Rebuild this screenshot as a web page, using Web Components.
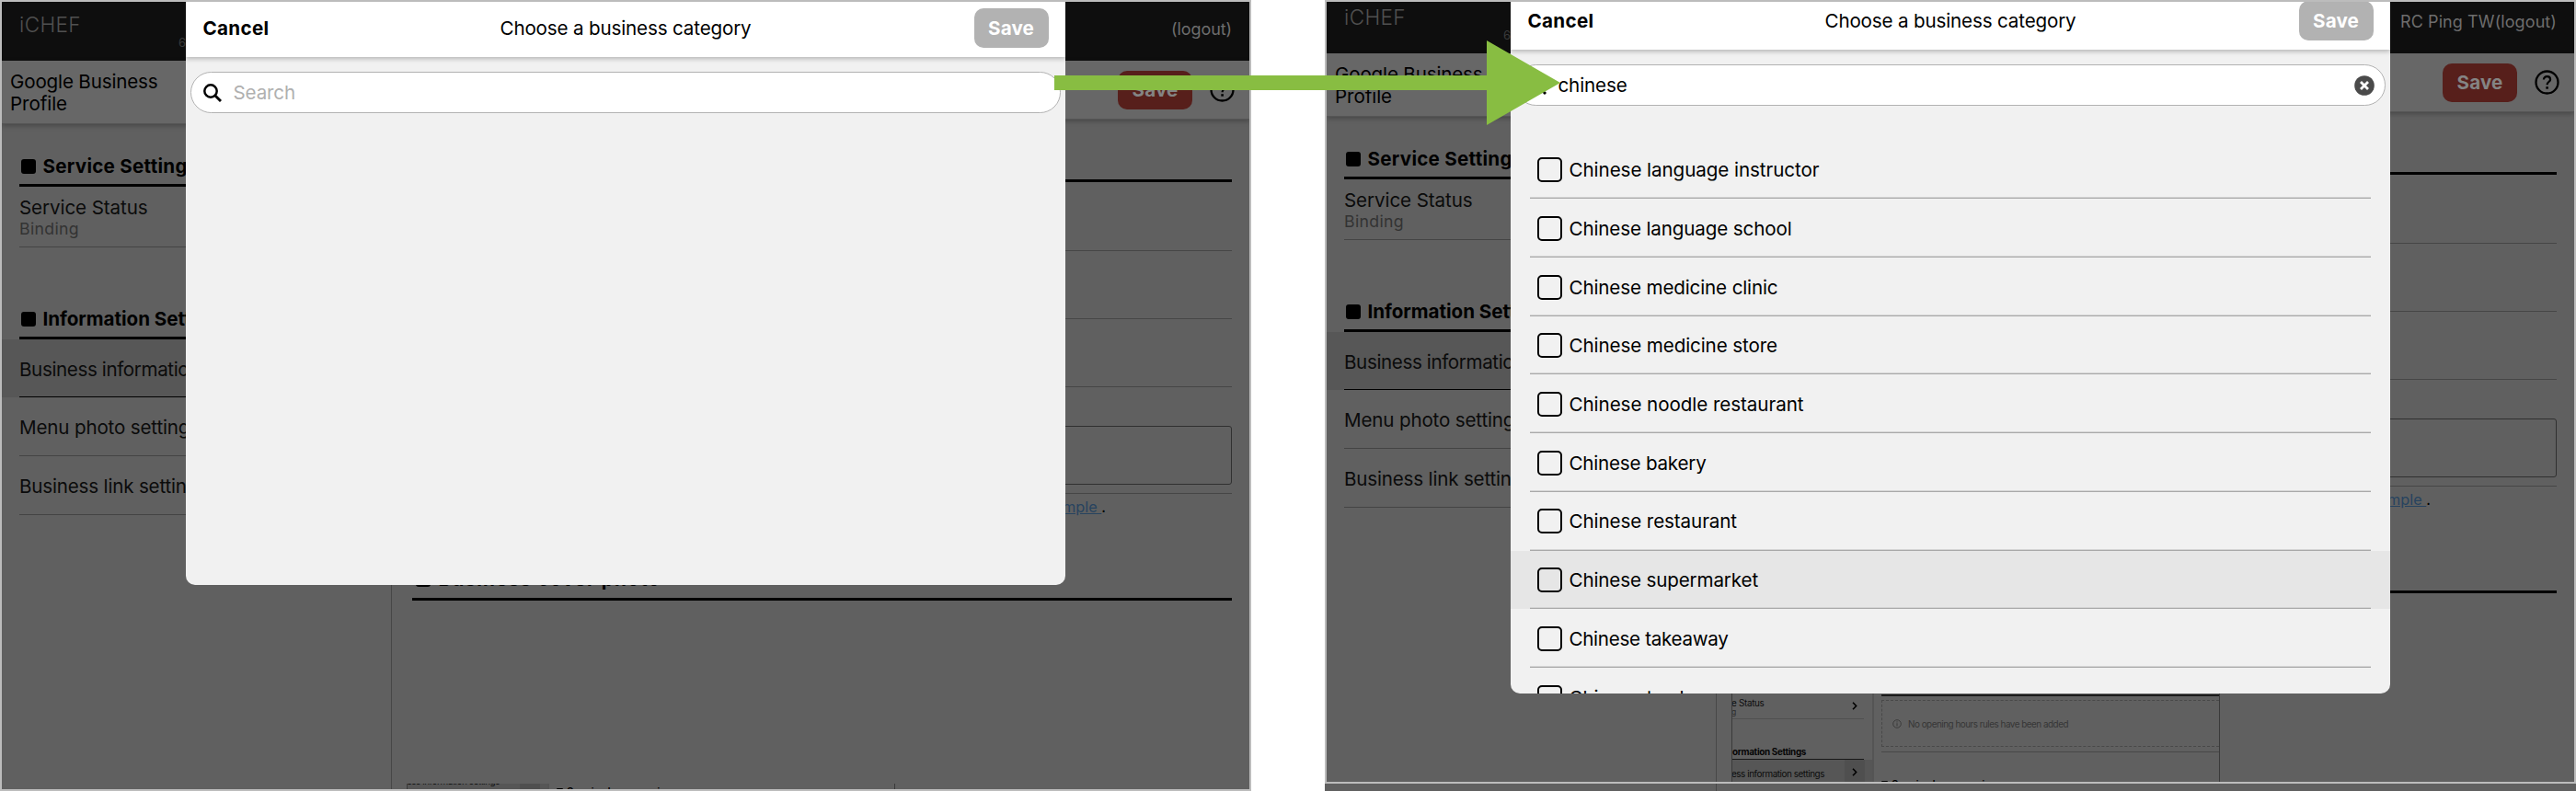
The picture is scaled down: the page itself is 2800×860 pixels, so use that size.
<!DOCTYPE html>
<html lang="en">
<head>
<meta charset="utf-8">
<title>Business category</title>
<style>
html,body{margin:0;padding:0;background:#fff}
body{width:2800px;height:860px;overflow:hidden;position:relative;font-family:Inter,"Liberation Sans",sans-serif;font-size:20.6px;line-height:24px;color:#000}
.stage{display:flex;justify-content:space-between;height:860px}
</style>
</head>
<body>
<div class="stage">
  <app-screen user="(logout)" uw="66">
    <category-dialog placeholder></category-dialog>
  </app-screen>
  <app-screen scrolled user="RC Ping TW(logout)" uw="170">
    <category-dialog query="chinese">
      <category-row w="272">Chinese language instructor</category-row>
      <category-row w="242">Chinese language school</category-row>
      <category-row w="227">Chinese medicine clinic</category-row>
      <category-row w="226.5">Chinese medicine store</category-row>
      <category-row w="255">Chinese noodle restaurant</category-row>
      <category-row w="149">Chinese bakery</category-row>
      <category-row w="182.5">Chinese restaurant</category-row>
      <category-row w="205.5" active>Chinese supermarket</category-row>
      <category-row w="173">Chinese takeaway</category-row>
      <category-row w="179">Chinese tea house</category-row>
    </category-dialog>
  </app-screen>
</div>
<flow-arrow></flow-arrow>

<script>
const define = (name, html, setup) => customElements.define(name, class extends HTMLElement {
  connectedCallback() {
    if (this.shadowRoot) return;
    const root = this.attachShadow({ mode: 'open' });
    root.innerHTML = html;
    if (setup) setup(this, root);
  }
});

/* One line of text whose tracking is tuned to a given width. */
define('fit-text', `<style>
:host{display:inline-block;white-space:nowrap}
span{display:inline-block;white-space:pre}
</style><span><slot></slot></span>`, (el, root) => {
  const w = parseFloat(el.getAttribute('w'));
  const n = el.textContent.length;
  const span = root.querySelector('span');
  requestAnimationFrame(() => {
    const now = span.getBoundingClientRect().width;
    if (now && n) span.style.letterSpacing = ((w - now) / n) + 'px';
  });
});

define('save-button', `<style>
:host{display:flex;align-items:center;justify-content:center;width:81px;height:42.5px;border-radius:10px;background:#b2b2b2;color:#fff;font-weight:700;font-size:20.6px;box-sizing:border-box}
:host([dim]){background:#571f1b;color:#848484}
</style><fit-text w="50">Save</fit-text>`);

define('section-heading', `<style>
:host{display:flex;align-items:center;gap:7.5px;height:42px;box-sizing:border-box;border-bottom:3px solid #000;font-weight:700;padding-left:2px;white-space:nowrap}
i{width:16px;height:16px;border-radius:3px;background:#000;flex:none}
</style><i></i><slot></slot>`);

define('menu-row', `<style>
:host{display:block;padding-left:19px;color:#0b0b0b}
div{height:64px;box-sizing:border-box;border-bottom:1px solid #444;display:flex;align-items:center;padding-top:3px;white-space:nowrap}
:host([selected]){background:#575757}
:host([selected]) div{border-color:#000;height:63px}
</style><div><slot></slot></div>`);

define('side-menu', `<style>
:host{display:block;width:424px;box-sizing:border-box;border-right:1px solid #474747}
.title{height:69px;box-sizing:border-box;background:#676767;padding:1px 0 0 9px;display:flex;flex-direction:column;justify-content:center;box-shadow:0 2px 5px rgba(0,0,0,.25);border-bottom:1px solid #555}
.head{margin:26px 0 0 19px}
.head.two{margin-top:58px}
.status{margin-left:19px;height:66px;box-sizing:border-box;padding-top:11px;border-bottom:1px solid #444;color:#0b0b0b}
.status small{display:block;font-size:17.7px;line-height:22px;color:#333}
.status fit-text{display:block}
</style>
<div class="title"><fit-text w="160.5">Google Business</fit-text><fit-text w="62">Profile</fit-text></div>
<section-heading class="head"><fit-text w="169">Service Settings</fit-text></section-heading>
<div class="status"><fit-text w="139.5">Service Status</fit-text><small><fit-text w="65">Binding</fit-text></small></div>
<section-heading class="head two"><fit-text w="204">Information Settings</fit-text></section-heading>
<menu-row selected><fit-text w="275">Business information settings</fit-text></menu-row>
<menu-row><fit-text w="196">Menu photo settings</fit-text></menu-row>
<menu-row><fit-text w="205">Business link settings</fit-text></menu-row>`);

/* Small preview of the settings page shown inside the cover section. */
define('page-preview', `<style>
:host{display:flex;width:531px;height:97px;box-sizing:border-box;border:solid #3a3a3a;border-width:0 1.5px;overflow:hidden;font-size:9.9px;line-height:10px;color:#0c0c0c}
aside{width:152px;border-right:2px solid #545454;flex:none;overflow:hidden}
.st{height:29px;width:143px;box-sizing:border-box;border-bottom:1px solid #505050;display:flex;justify-content:space-between;padding:6px 7px 0 0}
.st b{font-weight:400;display:block}
.clip{display:flex;justify-content:flex-start;margin-left:-1px}
.h{height:44px;width:143px;box-sizing:border-box;border-bottom:1.5px solid #181818;font-weight:700;display:flex;align-items:flex-end;padding-bottom:3.5px;color:#060606}
.row{height:30px;display:flex;background:#565656;align-items:flex-start}
.row span{padding-top:9.5px;flex:1;margin-left:-1px}
.box{width:22px;height:30px;background:#4f4f4f;display:flex;justify-content:center;padding-top:9px;margin-right:8px;box-sizing:border-box}
svg{display:block;flex:none}
main{flex:1;padding-left:8px;min-width:0}
.rule{height:2px;border-bottom:2px solid #1c1c1c;margin-bottom:4px}
.none{height:51px;box-sizing:border-box;border:1px dashed #484848;border-right:0;display:flex;align-items:center;gap:7.5px;padding-left:10.5px;color:#363636}
.line{border-bottom:1px solid #484848;height:4.5px}
.op{display:flex;gap:4px;margin-top:29.5px;font-weight:700;align-items:center;color:#000}
.op i{width:7px;height:7px;background:#000;border-radius:1px}
</style>
<aside>
 <div class="st"><div class="clip"><div><b><fit-text w="35.5">e Status</fit-text></b><small style="font-size:8.6px;display:block;line-height:8px;margin-top:1px;color:#2c2c2c">g</small></div></div>
 <svg width="6" height="9" viewBox="0 0 6 9" style="margin-top:4px"><path d="M1 .8 4.6 4.5 1 8.2" fill="none" stroke="#000" stroke-width="1.6"/></svg></div>
 <div class="h"><fit-text w="80">ormation Settings</fit-text></div>
 <div class="row"><span><fit-text w="101">ess information settings</fit-text></span><div class="box"><svg width="6" height="9" viewBox="0 0 6 9"><path d="M1 .8 4.6 4.5 1 8.2" fill="none" stroke="#000" stroke-width="1.6"/></svg></div></div>
</aside>
<main>
 <div class="rule"></div>
 <div class="none"><svg width="10" height="10" viewBox="0 0 10 10" fill="none" stroke="#383838"><circle cx="5" cy="5" r="4.3" stroke-width=".9"/><path d="M5 4.3V7.4M5 2.4v1"/></svg><fit-text w="174">No opening hours rules have been added</fit-text></div>
 <div class="line"></div>
 <div class="op"><i></i><fit-text w="116">Opening hours preview</fit-text></div>
</main>`);

define('settings-page', `<style>
:host{display:flex;flex-direction:column;width:932px;flex:none}
header{height:63.5px;box-sizing:border-box;background:#676767;display:flex;align-items:center;justify-content:flex-end;gap:18.5px;padding:1px 16.5px 0 0;box-shadow:0 2px 5px rgba(0,0,0,.25);border-bottom:1px solid #555}
header svg{display:block}
.body{margin:0 19px 0 21.5px}
.rule{margin-top:65.5px;height:3px;background:#000}
.l{height:74px;box-sizing:border-box;border-bottom:1px solid #464646}
.l.a{height:74.5px}
.field{margin-top:42px;height:64px;box-sizing:border-box;border:1px solid #303030;border-radius:3px}
.l.s{height:10px}
.hint{display:flex;justify-content:flex-end;padding-right:137px;font-size:16.3px;line-height:20px;margin-top:4.5px;white-space:pre}
.hint span{color:#27435f;text-decoration:underline}
section-heading{margin-top:49.5px;padding-left:4px;gap:9px}
page-preview{margin:108.5px 0 0 -5.5px}
</style>
<header><save-button dim></save-button>
<svg width="27" height="27" viewBox="0 0 27 27" fill="none" stroke="#000"><circle cx="13.5" cy="13.5" r="12" stroke-width="2.3"/><path d="M9.9 10.6c0-2.1 1.6-3.4 3.6-3.4s3.6 1.3 3.6 3.2c0 2.5-3.4 2.7-3.4 5.2v.6" stroke-width="2.2"/><path d="M12.3 18.2h2.6v2.5h-2.6z" fill="#000" stroke="none"/></svg>
</header>
<div class="body">
 <div class="rule"></div>
 <div class="l a"></div><div class="l"></div><div class="l"></div>
 <div class="field"></div>
 <div class="l s"></div>
 <div class="hint"><span>View example </span>.</div>
 <section-heading><fit-text w="242">Business cover photo</fit-text></section-heading>
 <page-preview></page-preview>
</div>`);

define('app-screen', `<style>
:host{display:block;position:relative;width:1360px;height:860px;overflow:hidden;background:#606060;box-sizing:border-box}
.content{margin:2px 0 0 2px;width:1356px}
:host([scrolled]) .content{margin-top:-6px}
.bar{height:64px;background:#0e0e0e;display:flex;justify-content:space-between;align-items:flex-start;padding:0 19px;box-sizing:border-box}
.brand{display:flex;align-items:flex-start}
.logo{font-size:22.6px;font-weight:300;color:#505050;line-height:26px;padding-top:4px;margin-top:8px}
.ver{font-size:13px;line-height:16px;color:#3a3a3a;padding-top:36px;margin-left:102px;width:12px;text-align:right}
.user{font-size:18px;color:#6d6d6d;padding-top:18px}
.cols{display:flex;align-items:stretch;height:810px}
.frame{position:absolute;inset:0;border:2px solid #bcbcbc;box-sizing:border-box;pointer-events:none}
:host([scrolled]) .frame{height:852px}
</style>
<div class="content">
 <div class="bar"><div class="brand"><fit-text class="logo" w="67">iCHEF</fit-text><span class="ver">6</span></div><fit-text class="user">x</fit-text></div>
 <div class="cols"><side-menu></side-menu><settings-page></settings-page></div>
</div>
<slot></slot>
<div class="frame"></div>`, (el, root) => {
  const u = root.querySelector('.user');
  const f = document.createElement('fit-text');
  f.className = 'user';
  f.setAttribute('w', el.getAttribute('uw'));
  f.textContent = el.getAttribute('user');
  u.replaceWith(f);
  if (!el.hasAttribute('scrolled')) {
    const page = root.querySelector('settings-page');
    page.shadowRoot.querySelector('page-preview').style.clipPath = 'inset(91px 0 0 0)';
  }
});

define('category-row', `<style>
:host{display:block;height:63.72px;box-sizing:border-box;padding:0 21px}
:host([active]){background:#e6e6e6}
div{height:100%;box-sizing:border-box;border-bottom:1px solid #a9a9a9;box-shadow:inset 0 -1px #d4d4d4;display:flex;align-items:center;gap:7.5px;padding:1.5px 0 0 8px}
i{width:27px;height:27px;box-sizing:border-box;border:2px solid #000;border-radius:5px;flex:none}
fit-text{margin-top:1px}
</style><div><i></i><span></span></div>`, (el, root) => {
  const f = document.createElement('fit-text');
  f.setAttribute('w', el.getAttribute('w'));
  f.textContent = el.textContent;
  root.querySelector('span').replaceWith(f);
});

define('search-field', `<style>
:host{display:flex;align-items:center;height:45px;box-sizing:border-box;border:1px solid #b2b2b2;border-radius:23px;background:#fff;padding:0 11px 0 13px}
.glass{flex:none;margin-right:12.5px}
.text{flex:1;padding-top:1.5px}
.hint{color:#b0b0b0}
svg{display:block}
</style>
<svg class="glass" width="20" height="20" viewBox="0 0 20 20" fill="none" stroke="#000"><circle cx="8" cy="8" r="6.7" stroke-width="2.5"/><path d="M12.7 12.7 19 19" stroke-width="2.9"/></svg>
<div class="text"></div>`, (el, root) => {
  const q = el.getAttribute('query');
  const t = root.querySelector('.text');
  t.innerHTML = q ? '<fit-text w="75">' + q + '</fit-text>' : '<fit-text class="hint" w="67.5">Search</fit-text>';
  if (q) t.insertAdjacentHTML('afterend', '<svg width="22" height="22" viewBox="0 0 22 22"><circle cx="11" cy="11" r="10.8" fill="#4a4a4a"/><path d="M7 7l8 8M15 7l-8 8" stroke="#fff" stroke-width="2.8"/></svg>');
});

define('category-dialog', `<style>
:host{display:flex;flex-direction:column;position:absolute;left:202px;top:2px;width:956px;height:633.5px;border-radius:0 0 10px 10px;background:#f1f1f1;overflow:hidden}
:host([query]){top:-6px;height:759.7px}
header{flex:none;height:60px;box-sizing:border-box;background:#fff;display:grid;grid-template-columns:1fr auto 1fr;align-items:center;padding:0 18.5px 3px 18.5px;box-shadow:0 2px 5px rgba(0,0,0,.25)}
b{font-weight:700}
save-button{justify-self:end}
search-field{flex:none;margin:16px 5px 0 5px}
.list{margin-top:37.5px}
</style>
<header><b><fit-text w="72">Cancel</fit-text></b><fit-text w="273">Choose a business category</fit-text><save-button></save-button></header>
<search-field></search-field>
<div class="list"><slot></slot></div>`, (el, root) => {
  if (el.hasAttribute('query')) {
    const s = document.createElement('search-field');
    s.setAttribute('query', el.getAttribute('query'));
    root.querySelector('search-field').replaceWith(s);
  }
});

define('flow-arrow', `<style>
:host{display:block;position:absolute;left:1146px;top:44px;width:550px;height:92px}
svg{display:block}
</style><svg width="550" height="92" viewBox="0 0 550 92" fill="#88bd42"><path d="M0 38h470V0l80 46-80 46V54H0z"/></svg>`);
</script>
</body>
</html>
